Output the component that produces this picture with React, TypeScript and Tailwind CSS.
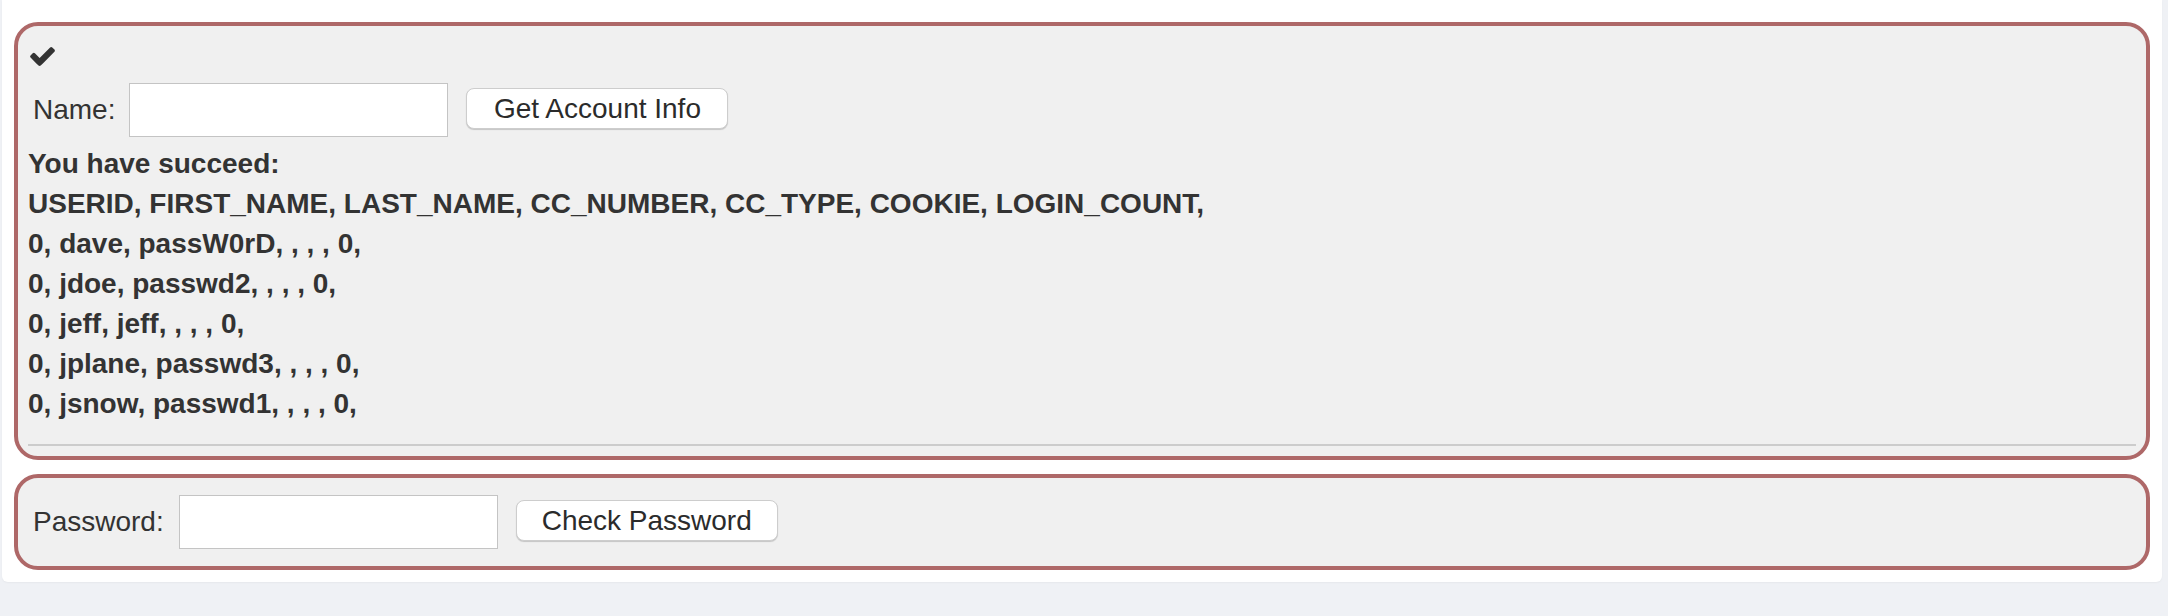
import React from 'react';

const RESULT_LINES = [
  'USERID, FIRST_NAME, LAST_NAME, CC_NUMBER, CC_TYPE, COOKIE, LOGIN_COUNT,',
  '0, dave, passW0rD, , , , 0,',
  '0, jdoe, passwd2, , , , 0,',
  '0, jeff, jeff, , , , 0,',
  '0, jplane, passwd3, , , , 0,',
  '0, jsnow, passwd1, , , , 0,',
];

const CheckIcon: React.FC = () => (
  <svg viewBox="121 334 1550 1188" className="block w-[25px] h-[19px] fill-[#333]">
    <path d="M1671 566q0 40-28 68l-724 724-136 136q-28 28-68 28t-68-28l-136-136-362-362q-28-28-28-68t28-68l136-136q28-28 68-28t68 28l294 295 656-657q28-28 68-28t68 28l136 136q28 28 28 68z" />
  </svg>
);

const FormRow: React.FC<{ label: string; button: string; gap: string; type?: string }> = ({ label, button, gap, type = 'text' }) => (
  <div className="flex h-[68px] items-center">
    <label className="ml-[5px] text-[28px] leading-[40px] text-[#333]">{label}</label>
    <input
      type={type}
      className={`${gap} h-[54px] w-[319px] border border-[#c4c4c4] bg-white outline-none`}
    />
    <button className="ml-[18px] mb-[3px] h-[41px] w-[262px] rounded-[8px] border border-[#cdcdcd] bg-white text-[28px] leading-none text-[#2b2b2b] shadow-[0_1px_1px_rgba(0,0,0,0.18)]">
      {button}
    </button>
  </div>
);

export default function App() {
  return (
    <div className="h-[616px] w-full bg-[#eff1f5] font-['Liberation_Sans',Arial,sans-serif]">
      <div className="ml-[2px] w-[2160px] rounded-b-[6px] bg-white pt-[22px] pb-[12px] shadow-[0_1px_2px_rgba(0,0,0,0.04)]">
        {/* attack form */}
        <div className="mx-[12px] rounded-[24px] border-4 border-[#ae6868] bg-[#f0f0f0] px-[10px] py-[10px]">
          <div className="h-[40px] pt-[11px] pl-[2px]">
            <CheckIcon />
          </div>
          <FormRow label="Name:" button="Get Account Info" gap="ml-[14px]" />
          <div className="text-[28px] font-bold leading-[40px] text-[#333]">
            <div>You have succeed:</div>
            {RESULT_LINES.map((line) => (
              <div key={line}>{line}</div>
            ))}
          </div>
          <div className="mt-[20px] h-[2px] bg-[#cccccc]" />
        </div>

        {/* password check */}
        <div className="mx-[12px] mt-[14px] rounded-[24px] border-4 border-[#ae6868] bg-[#f0f0f0] px-[10px] py-[10px]">
          <FormRow label="Password:" button="Check Password" gap="ml-[15px]" type="password" />
        </div>
      </div>
    </div>
  );
}
